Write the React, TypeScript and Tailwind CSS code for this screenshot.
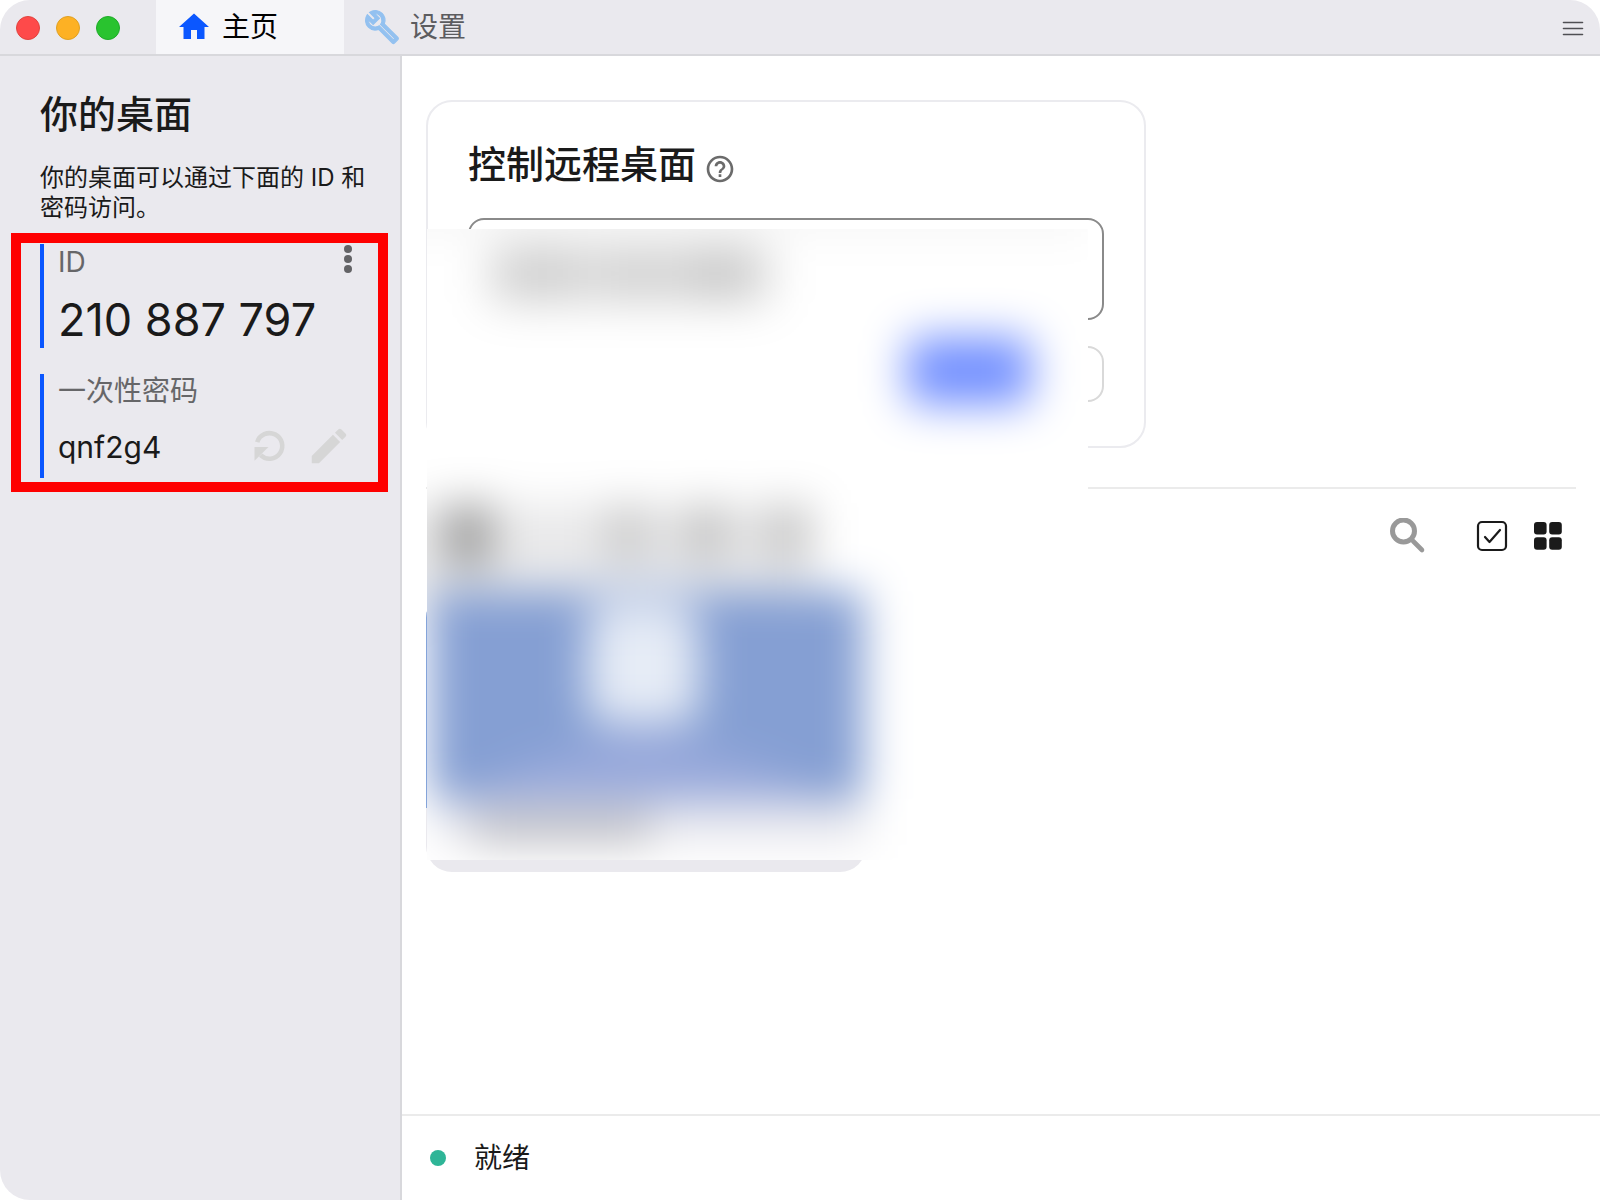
import { useState } from "react";
import { MdEdit, MdHelpOutline, MdHome } from "react-icons/md";

const fontStack = "font-['Inter','Noto_Sans_CJK_SC',sans-serif]";

const WrenchIcon = () => (
  <svg width="36" height="36" viewBox="0 0 24 24" aria-hidden="true">
    <path
      d="M22.61 18.99l-9.08-9.08c.93-2.34.45-5.1-1.44-7C9.79.61 6.21.4 3.66 2.26L7.5 6.11 6.08 7.52 2.25 3.69C.39 6.23.6 9.82 2.9 12.11c1.86 1.86 4.57 2.35 6.89 1.48l9.11 9.11c.39.39 1.02.39 1.41 0l2.3-2.3c.4-.38.4-1.01 0-1.41zm-3 1.6l-9.46-9.46c-.61.45-1.29.72-2 .82-1.36.2-2.79-.21-3.83-1.25C3.37 9.76 2.93 8.5 3 7.26l3.09 3.09 4.24-4.24-3.09-3.09c1.24-.07 2.49.37 3.44 1.31 1.08 1.08 1.49 2.57 1.24 3.96-.12.71-.42 1.37-.88 1.96l9.45 9.45-.88.89z"
      fill="#93c1f0"
      stroke="#93c1f0"
      strokeWidth=".75"
    />
  </svg>
);

const TitleBar = () => {
  return (
    <header className="flex h-14 shrink-0 items-stretch border-b-2 border-[#d8d8dc] bg-[#eae9ee]">
      <div className="flex w-[156px] shrink-0 items-center gap-4 pt-0.5 pl-4">
        <button
          aria-label="关闭"
          className="size-6 rounded-full border border-[#e0443e] bg-[#fe4a4a]"
        />
        <button
          aria-label="最小化"
          className="size-6 rounded-full border border-[#dfa023] bg-[#fdb124]"
        />
        <button
          aria-label="缩放"
          className="size-6 rounded-full border border-[#1fab29] bg-[#29c32f]"
        />
      </div>
      <nav className="flex grow items-stretch text-[28px]">
        <a
          href="#home"
          className="flex w-[188px] items-center gap-2.5 bg-[#f6f6f9] pl-5 text-black"
        >
          <MdHome className="size-9 text-[#0b57ff]" />
          主页
        </a>
        <a
          href="#settings"
          className="flex items-center gap-2.5 pl-5 text-[#5c5c5f]"
        >
          <WrenchIcon />
          设置
        </a>
      </nav>
      <button aria-label="菜单" className="mr-4 flex items-center pt-1">
        <svg width="22" height="18" viewBox="0 0 22 18" aria-hidden="true">
          <path
            d="M1.5 2.5h19M1.5 8.5h19M1.5 14.5h19"
            stroke="#4f4f53"
            strokeWidth="1.6"
            strokeLinecap="round"
          />
        </svg>
      </button>
    </header>
  );
};

const MoreIcon = () => (
  <svg width="8" height="30" viewBox="0 0 8 30" fill="#636366" aria-hidden="true">
    <circle cx="4" cy="5" r="4" />
    <circle cx="4" cy="15" r="4" />
    <circle cx="4" cy="25" r="4" />
  </svg>
);

const RefreshIcon = () => (
  <svg width="32" height="34" viewBox="0 0 32 34" aria-hidden="true">
    <path
      d="M3.2 13.2A12.8 12.8 0 1 1 6.6 26.2"
      fill="none"
      stroke="#d6d6d6"
      strokeWidth="4.6"
    />
    <path d="M.5 18h14L.5 31.8z" fill="#d6d6d6" />
  </svg>
);

const Sidebar = () => {
  return (
    <aside className="w-[402px] shrink-0 border-r-2 border-[#d8d8dc] bg-[#eae9ee] pt-[34px] text-[#1a1a1a]">
      <div className="pr-8 pl-10">
        <h1 className="text-[38px] leading-[48px] font-medium">你的桌面</h1>
        <p className="mt-[25px] text-[24px] leading-[30px]">
          你的桌面可以通过下面的 ID 和密码访问。
        </p>
      </div>

      <section className="relative mt-[21px] flex flex-col gap-[26px] px-10">
        <div className="h-[104px] border-l-4 border-[#0b57ff] pl-3.5">
          <div className="flex h-9 items-start justify-between pr-2">
            <span className="text-[28px] leading-9 text-[#666668]">ID</span>
            <button aria-label="更多">
              <MoreIcon />
            </button>
          </div>
          <p className="mt-3 text-[45px] leading-[56px]">210 887 797</p>
        </div>
        <div className="h-[104px] border-l-4 border-[#0b57ff] pl-3.5">
          <p className="text-[28px] leading-[34px] text-[#666668]">
            一次性密码
          </p>
          <div className="mt-4 flex h-11 items-center pr-2">
            <span className="grow pt-0.5 text-[30px] leading-9">qnf2g4</span>
            <button aria-label="刷新密码">
              <RefreshIcon />
            </button>
            <button aria-label="修改密码" className="ml-5">
              <MdEdit className="size-[46px] text-[#d6d6d6]" />
            </button>
          </div>
        </div>
        {/* highlight around the credentials */}
        <div className="pointer-events-none absolute -top-[11px] right-3 -bottom-[14px] left-[11px] border-[10px] border-[#fe0000]" />
      </section>
    </aside>
  );
};

// Frosted patch that hides the remote id and the peer card
const PrivacyMask = () => (
  <svg
    className="pointer-events-none absolute top-[173px] left-[25px]"
    width="661"
    height="631"
    viewBox="0 0 661 631"
    aria-hidden="true"
  >
    <defs>
      <clipPath id="maskArea">
        <path d="M0 0H661V276H520V631H0z" />
      </clipPath>
      <filter
        id="soft"
        filterUnits="userSpaceOnUse"
        x="-120"
        y="-120"
        width="900"
        height="870"
        colorInterpolationFilters="sRGB"
      >
        <feGaussianBlur stdDeviation="22" />
      </filter>
    </defs>
    <g clipPath="url(#maskArea)">
      <rect width="661" height="631" fill="#ffffff" />
      <g filter="url(#soft)">
        <rect x="-120" y="-120" width="900" height="870" fill="#ffffff" />
        <rect x="-40" y="-40" width="700" height="44" fill="#f6f6f6" />
        <rect x="60" y="14" width="286" height="62" rx="12" fill="#dedede" />
        <rect x="80" y="24" width="70" height="42" fill="#cfcfcf" />
        <rect x="176" y="26" width="70" height="40" fill="#d2d2d2" />
        <rect x="260" y="24" width="60" height="42" fill="#c8c8c8" />
        <rect x="480" y="108" width="124" height="68" rx="12" fill="#7390ff" />
        <rect x="-30" y="274" width="420" height="110" fill="#e9e9ea" />
        <rect x="18" y="276" width="46" height="62" fill="#9a9a9a" />
        <rect x="180" y="278" width="42" height="52" fill="#c8c8c8" />
        <rect x="258" y="278" width="42" height="52" fill="#bfbfbf" />
        <rect x="338" y="278" width="42" height="52" fill="#c3c3c3" />
        <rect x="10" y="565" width="430" height="50" fill="#e9e9ee" />
        <rect x="46" y="580" width="178" height="36" fill="#c0c0c6" />
        <rect x="3" y="362" width="434" height="208" rx="4" fill="#859fd3" />
        <path d="M30 572L100 534L215 500L330 534L410 572z" fill="#98a9db" />
        <rect x="164" y="352" width="100" height="60" fill="#bccae6" />
        <rect x="160" y="382" width="112" height="112" rx="18" fill="#e6ecf6" />
      </g>
    </g>
  </svg>
);

const ConnectCard = () => {
  const [remoteId, setRemoteId] = useState("");

  return (
    <section className="max-w-[720px] rounded-[26px] border-2 border-[#ebebef] px-10 pt-[38px] pb-11">
      <div className="flex items-center gap-2">
        <h2 className="text-[38px] leading-[48px] font-medium text-[#1a1a1a]">
          控制远程桌面
        </h2>
        <button aria-label="帮助" className="mt-2.5">
          <MdHelpOutline className="size-8 text-[#6b6b6b]" />
        </button>
      </div>
      <input
        aria-label="远程 ID"
        value={remoteId}
        onChange={(e) => setRemoteId(e.target.value)}
        className="mt-[30px] block h-[102px] w-full rounded-2xl border-2 border-[#8a8a8a] px-4 text-[45px] outline-none"
      />
      <div className="mt-[26px] flex justify-end">
        <button
          aria-label="连接选项"
          className="h-14 w-14 rounded-2xl border-2 border-[#d9d9d9]"
        />
      </div>
    </section>
  );
};

const PeerToolbar = () => {
  return (
    <div className="mt-[19px] flex h-14 items-center justify-end pr-3">
      <button aria-label="搜索">
        <svg width="36" height="36" viewBox="0 0 36 36" aria-hidden="true">
          <g fill="none" stroke="#999999">
            <circle cx="13.5" cy="13" r="11" strokeWidth="5" />
            <path d="M23 23l9 9" strokeWidth="4.6" strokeLinecap="round" />
          </g>
        </svg>
      </button>
      <button aria-label="多选" className="ml-[50px]">
        <svg width="32" height="32" viewBox="0 0 32 32" aria-hidden="true">
          <g fill="none" stroke="#1a1a1a" strokeWidth="2.2">
            <rect x="2" y="2" width="28" height="28" rx="4" />
            <path d="M9 17l4.5 5L24 10" strokeLinecap="round" strokeLinejoin="round" />
          </g>
        </svg>
      </button>
      <button aria-label="网格视图" className="ml-6">
        <svg width="32" height="32" viewBox="0 0 32 32" fill="#1a1a1a" aria-hidden="true">
          <rect x="2" y="2" width="12.6" height="12.6" rx="3" />
          <rect x="17.2" y="2" width="12.6" height="12.6" rx="3" />
          <rect x="2" y="17.2" width="12.6" height="12.6" rx="3" />
          <rect x="17.2" y="17.2" width="12.6" height="12.6" rx="3" />
        </svg>
      </button>
    </div>
  );
};

export default function App() {
  return (
    <div
      className={`flex min-h-screen flex-col overflow-hidden rounded-[30px] bg-white ${fontStack}`}
    >
      <TitleBar />
      <div className="flex grow">
        <Sidebar />
        <div className="flex min-w-0 grow flex-col">
          <main className="relative grow px-6 pt-11">
            <ConnectCard />
            <hr className="mt-[39px] border-t-2 border-[#ebebeb]" />
            <PeerToolbar />
            <div className="mt-7 w-[440px] overflow-hidden rounded-[26px] bg-[#eae9ee]">
              <div className="h-[216px] bg-[#84a4da]" />
              <div className="h-16" />
            </div>
            <PrivacyMask />
          </main>
          <footer className="flex h-[86px] shrink-0 items-center border-t-2 border-[#ebebeb] pl-7">
            <span className="size-4 rounded-full bg-[#2eb597]" />
            <span className="ml-7 text-[28px] text-[#1a1a1a]">就绪</span>
          </footer>
        </div>
      </div>
    </div>
  );
}
